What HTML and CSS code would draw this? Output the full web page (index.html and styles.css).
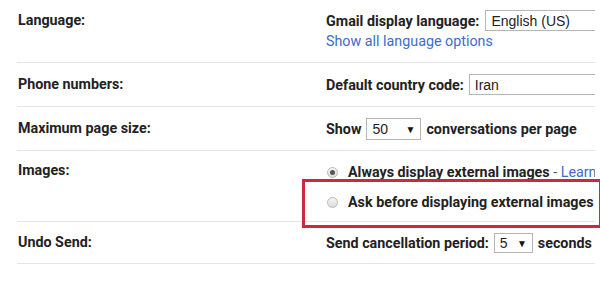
FILE: index.html
```html
<!DOCTYPE html>
<html>
<head>
<meta charset="utf-8">
<link rel="stylesheet" href="styles.css">
</head>
<body>
<div class="settings">
  <div class="row row-lang">
    <div class="label">Language:</div>
    <div class="value">
      <div class="line">
        <span class="b">Gmail display language:</span>
        <span class="select sel-lang">English (US)</span>
      </div>
      <div class="link-line"><a class="link">Show all language options</a></div>
    </div>
  </div>
  <div class="row row-phone">
    <div class="label">Phone numbers:</div>
    <div class="value">
      <div class="line">
        <span class="b">Default country code:</span>
        <span class="select sel-country">Iran</span>
      </div>
    </div>
  </div>
  <div class="row row-size">
    <div class="label">Maximum page size:</div>
    <div class="value">
      <div class="line">
        <span class="b">Show</span>
        <span class="select sel-small sel-50">50<span class="arrow">▼</span></span>
        <span class="b">conversations per page</span>
      </div>
    </div>
  </div>
  <div class="row row-images">
    <div class="label">Images:</div>
    <div class="value radios">
      <div class="radio-line"><span class="radio checked"></span><span class="b">Always display external images</span>&nbsp;<span class="dash">-</span>&nbsp;<a class="link">Learn more</a></div>
      <div class="radio-line"><span class="radio"></span><span class="b">Ask before displaying external images</span></div>
    </div>
  </div>
  <div class="row row-undo">
    <div class="label">Undo Send:</div>
    <div class="value">
      <div class="line">
        <span class="b">Send cancellation period:</span>
        <span class="select sel-small sel-5">5<span class="arrow">▼</span></span>
        <span class="b">seconds</span>
      </div>
    </div>
  </div>
</div>
<div class="highlight"></div>
</body>
</html>
```
FILE: styles.css
```css
html, body {
  margin: 0;
  padding: 0;
  background: #fff;
}
body {
  font-family: Roboto, "Liberation Sans", Arial, sans-serif;
  font-size: 14.3px;
  color: #222;
  position: relative;
  width: 600px;
  height: 281px;
  overflow: hidden;
}
.settings {
  margin-left: 17px;
  width: 578px;
  overflow: hidden;
}
.row {
  display: flex;
  border-bottom: 1px solid #e5e5e5;
  white-space: nowrap;
}
.label {
  width: 309px;
  flex: none;
  font-weight: 700;
  line-height: 17px;
  padding-left: 1px;
  box-sizing: border-box;
}
.value {
  flex: 1;
  min-width: 0;
  overflow: hidden;
}
.b {
  font-weight: 700;
}
.line {
  display: flex;
  align-items: center;
  gap: 5px;
}
.select {
  display: inline-flex;
  align-items: center;
  box-sizing: border-box;
  border: 1px solid #b5b5b5;
  font-family: "Liberation Sans", Arial, sans-serif;
  font-size: 14px;
  color: #222;
  padding-left: 5px;
  background: #fff;
  flex: none;
}
.arrow {
  font-size: 10px;
  margin-left: auto;
  margin-right: 5px;
  color: #111;
}
.link {
  color: #3d6dc4;
}
.dash {
  color: #555;
}

.row-lang {
  padding: 10px 0 12px;
}
.row-lang .label { padding-top: 2px; }
.row-lang .line { gap: 6px; }
.sel-lang {
  height: 21px;
  width: 150px;
}
.link-line {
  line-height: 18px;
  margin-top: 1px;
}

.row-phone {
  padding: 11px 0 11px;
}
.row-phone .label { padding-top: 2px; }
.sel-country {
  height: 21px;
  width: 150px;
}

.row-size {
  padding: 11px 0 10px;
}
.row-size .label { padding-top: 2px; }
.sel-small { height: 22px; }
.sel-50 { width: 55px; }

.row-images {
  padding: 11px 0 9px;
}
.row-images .label { padding-top: 0; }
.radios {
  display: flex;
  flex-direction: column;
  gap: 10px;
}
.radio-line {
  display: flex;
  align-items: center;
  height: 20px;
}
.radio {
  width: 11px;
  height: 11px;
  box-sizing: border-box;
  border-radius: 50%;
  border: 1px solid #b9b9b9;
  background: linear-gradient(#f4f4f4, #dcdcdc);
  margin-left: 1px;
  margin-right: 10px;
  position: relative;
  flex: none;
}
.radio.checked::after {
  content: "";
  position: absolute;
  left: 2px;
  top: 2px;
  width: 5px;
  height: 5px;
  border-radius: 50%;
  background: #555;
}

.row-undo {
  padding: 11px 0 10px;
}
.row-undo .label { padding-top: 1px; }
.row-undo .sel-small { height: 20px; }
.sel-5 { width: 39px; }

.highlight {
  position: absolute;
  left: 302px;
  top: 179px;
  width: 300px;
  height: 49px;
  box-sizing: border-box;
  border: 3px solid #cc2a36;
}
```
